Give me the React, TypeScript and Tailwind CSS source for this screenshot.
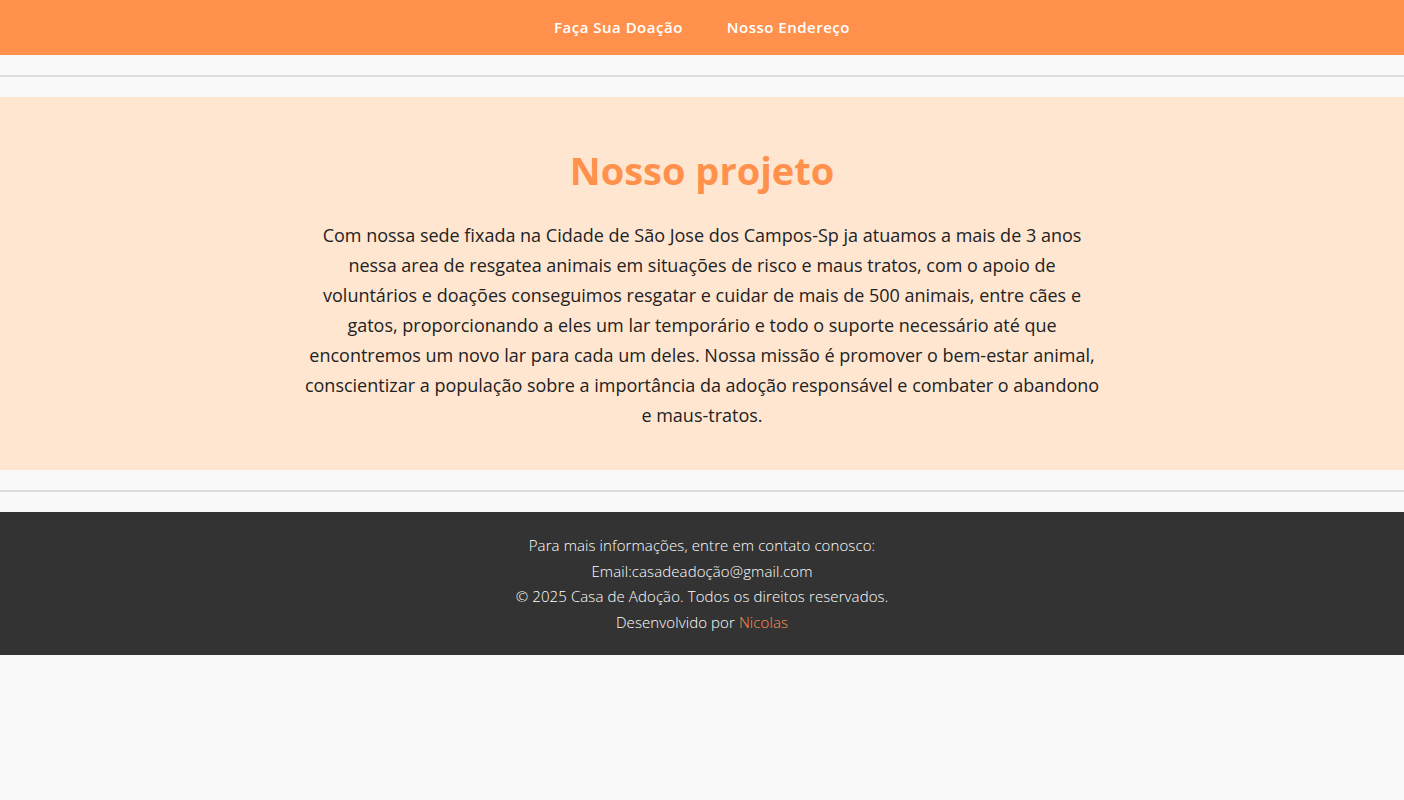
import React from 'react';

const navLinks = ["Faça Sua Doação", "Nosso Endereço"];

export default function App() {
    return (
        <div className="min-h-screen bg-[#f9f9f9] text-[#333] font-['Open_Sans',sans-serif]">
            <header className="h-[55px] bg-[#ff914d] flex items-center justify-center gap-[44px]">
                {navLinks.map((link) => (
                    <a key={link} href="#" className="text-white font-semibold text-[15px] tracking-[0.5px]">
                        {link}
                    </a>
                ))}
            </header>

            <hr className="my-5 border-0 border-t-2 border-[#dddddd]" />

            <section className="bg-[#ffe6d1] pt-[49px] pb-[40px] px-5 text-center">
                <h2 className="text-[38px] leading-[48px] font-bold text-[#ff914d]">Nosso projeto</h2>
                <p className="mt-[26px] mx-auto max-w-[800px] text-[18px] leading-[30px] text-[#222]">
                    Com nossa sede fixada na Cidade de São Jose dos Campos-Sp ja atuamos a mais de 3 anos nessa area de resgatea animais em situações de risco e maus tratos, com o apoio de voluntários e doações conseguimos resgatar e cuidar de mais de 500 animais, entre cães e gatos, proporcionando a eles um lar temporário e todo o suporte necessário até que encontremos um novo lar para cada um deles. Nossa missão é promover o bem-estar animal, conscientizar a população sobre a importância da adoção responsável e combater o abandono e maus-tratos.
                </p>
            </section>

            <hr className="my-5 border-0 border-t-2 border-[#dddddd]" />

            <footer className="bg-[#333333] pt-[21px] pb-5 text-center text-white text-[15px] leading-[25.6px] font-light tracking-[0.1px]">
                <p>Para mais informações, entre em contato conosco:</p>
                <p>Email:casadeadoção@gmail.com</p>
                <p>© 2025 Casa de Adoção. Todos os direitos reservados.</p>
                <p>
                    Desenvolvido por <a href="#" className="text-[#ff914d]">Nicolas</a>
                </p>
            </footer>
        </div>
    );
}
